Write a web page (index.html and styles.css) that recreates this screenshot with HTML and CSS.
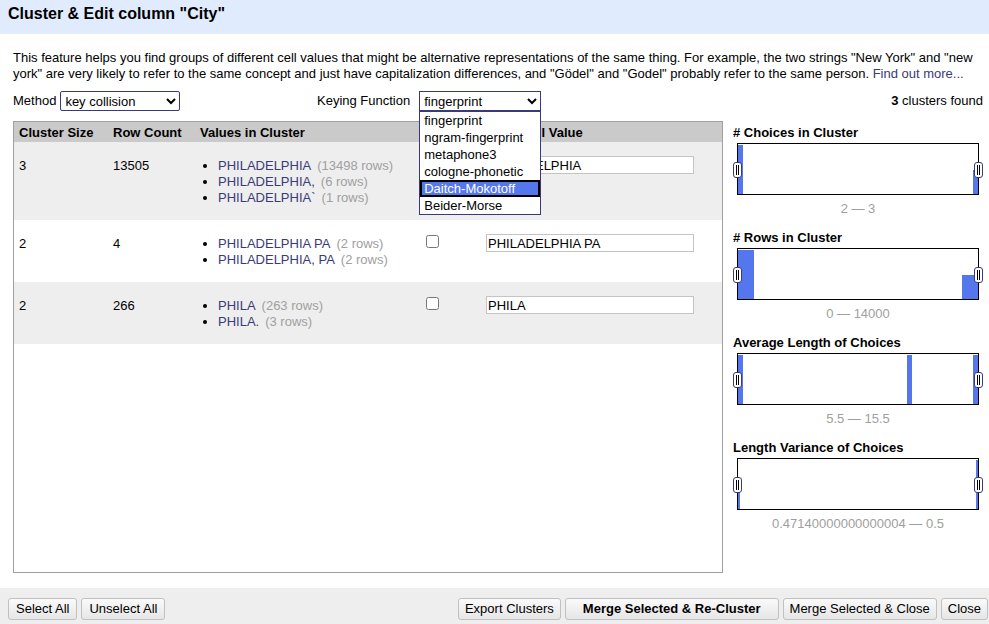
FILE: index.html
```html
<!DOCTYPE html>
<html lang="en">
<head>
<meta charset="utf-8">
<title>Cluster &amp; Edit column "City"</title>
<link rel="stylesheet" href="styles.css">
</head>
<body>
<header class="dialog-header"><h1>Cluster &amp; Edit column "City"</h1></header>
<main class="dialog-body">
  <p class="intro">This feature helps you find groups of different cell values that might be alternative representations of the same thing. For example, the two strings "New York" and "new<br>york" are very likely to refer to the same concept and just have capitalization differences, and "Gödel" and "Godel" probably refer to the same person. <a href="#">Find out more...</a></p>
  <div class="controls">
    <div class="control">
      <label for="method">Method</label>
      <select id="method"><option>key collision</option><option>nearest neighbor</option></select>
    </div>
    <div class="control keying">
      <label for="keying">Keying Function</label>
      <div class="dropdown">
        <select id="keying"><option>fingerprint</option><option>ngram-fingerprint</option><option>metaphone3</option><option>cologne-phonetic</option><option>Daitch-Mokotoff</option><option>Beider-Morse</option></select>
        <ul class="menu" role="listbox" aria-label="Keying Function">
          <li role="option">fingerprint</li>
          <li role="option">ngram-fingerprint</li>
          <li role="option">metaphone3</li>
          <li role="option">cologne-phonetic</li>
          <li role="option" class="active" aria-selected="true">Daitch-Mokotoff</li>
          <li role="option">Beider-Morse</li>
        </ul>
      </div>
    </div>
    <div class="summary"><b>3</b> clusters found</div>
  </div>
  <div class="panes">
    <div class="clusters">
      <table>
        <colgroup><col class="col-size"><col class="col-count"><col class="col-values"><col class="col-merge"><col></colgroup>
        <thead>
          <tr><th>Cluster Size</th><th>Row Count</th><th>Values in Cluster</th><th aria-label="Merge"></th><th class="new-value">New Cell Value</th></tr>
        </thead>
        <tbody>
          <tr>
            <td>3</td><td>13505</td>
            <td><ul class="values">
              <li><a href="#">PHILADELPHIA</a><span>(13498 rows)</span></li>
              <li><a href="#">PHILADELPHIA,</a><span>(6 rows)</span></li>
              <li><a href="#">PHILADELPHIA`</a><span>(1 rows)</span></li>
            </ul></td>
            <td class="field"><input type="checkbox" aria-label="Merge cluster 1"></td>
            <td class="field"><input type="text" aria-label="New value for cluster 1" value="PHILADELPHIA"></td>
          </tr>
          <tr>
            <td>2</td><td>4</td>
            <td><ul class="values">
              <li><a href="#">PHILADELPHIA PA</a><span>(2 rows)</span></li>
              <li><a href="#">PHILADELPHIA, PA</a><span>(2 rows)</span></li>
            </ul></td>
            <td class="field"><input type="checkbox" aria-label="Merge cluster 2"></td>
            <td class="field"><input type="text" aria-label="New value for cluster 2" value="PHILADELPHIA PA"></td>
          </tr>
          <tr>
            <td>2</td><td>266</td>
            <td><ul class="values">
              <li><a href="#">PHILA</a><span>(263 rows)</span></li>
              <li><a href="#">PHILA.</a><span>(3 rows)</span></li>
            </ul></td>
            <td class="field"><input type="checkbox" aria-label="Merge cluster 3"></td>
            <td class="field"><input type="text" aria-label="New value for cluster 3" value="PHILA"></td>
          </tr>
        </tbody>
      </table>
    </div>
    <aside class="facets">
      <section class="facet">
        <h2># Choices in Cluster</h2>
        <div class="histogram">
          <svg viewBox="0 0 240 50" preserveAspectRatio="none"><rect x="0" y="1" width="5" height="49"/><rect x="235" y="26" width="5" height="24"/></svg>
          <input type="range" aria-label="Minimum choices" value="0"><input type="range" aria-label="Maximum choices" value="100">
        </div>
        <p>2 — 3</p>
      </section>
      <section class="facet">
        <h2># Rows in Cluster</h2>
        <div class="histogram">
          <svg viewBox="0 0 240 50" preserveAspectRatio="none"><rect x="0" y="1" width="16" height="49"/><rect x="224" y="26" width="16" height="24"/></svg>
          <input type="range" aria-label="Minimum rows" value="0"><input type="range" aria-label="Maximum rows" value="100">
        </div>
        <p>0 — 14000</p>
      </section>
      <section class="facet">
        <h2>Average Length of Choices</h2>
        <div class="histogram">
          <svg viewBox="0 0 240 50" preserveAspectRatio="none"><rect x="0" y="1" width="5" height="49"/><rect x="169" y="1" width="5" height="49"/><rect x="235" y="1" width="5" height="49"/></svg>
          <input type="range" aria-label="Minimum average length" value="0"><input type="range" aria-label="Maximum average length" value="100">
        </div>
        <p>5.5 — 15.5</p>
      </section>
      <section class="facet">
        <h2>Length Variance of Choices</h2>
        <div class="histogram">
          <svg viewBox="0 0 240 50" preserveAspectRatio="none"><rect x="0" y="26" width="2" height="24"/><rect x="238" y="1" width="2" height="49"/></svg>
          <input type="range" aria-label="Minimum length variance" value="0"><input type="range" aria-label="Maximum length variance" value="100">
        </div>
        <p>0.47140000000000004 — 0.5</p>
      </section>
    </aside>
  </div>
</main>
<footer class="dialog-footer">
  <div class="buttons selection"><button>Select All</button><button>Unselect All</button></div>
  <div class="buttons"><button>Export Clusters</button><button class="primary">Merge Selected &amp; Re-Cluster</button><button>Merge Selected &amp; Close</button><button>Close</button></div>
</footer>
</body>
</html>
```
FILE: styles.css
```css
* { box-sizing: border-box; }
body {
  margin: 0;
  min-height: 100vh;
  display: flex;
  flex-direction: column;
  background: #fff;
  color: #000;
  font: 13px/16px "Liberation Sans", Arial, sans-serif;
}
h1, h2, p, ul { margin: 0; padding: 0; }
a { color: #3a3a78; text-decoration: none; }
select, input, button { margin: 0; font: inherit; color: inherit; }

.dialog-header { padding: 4px 8px 10px; background: #e0ebfd; }
.dialog-header h1 { font-size: 16px; line-height: 20px; }

.dialog-body {
  flex: 1;
  display: flex;
  flex-direction: column;
  padding: 16px 6px 15px 13px;
}
.intro { white-space: nowrap; }

.controls {
  display: grid;
  grid-template-columns: 304px 1fr auto;
  align-items: center;
  margin: 9px 0 10px;
  line-height: 18px;
}
.control { display: flex; align-items: center; gap: 4px; }
.keying { gap: 9px; }
.control select {
  width: 120px;
  height: 20px;
  padding: 0;
  border: 1px solid #3a3a78;
  border-radius: 2px;
  background-color: #fff;
}
.dropdown { position: relative; }
.keying select { display: block; width: 122px; border-radius: 0; }
.menu {
  position: absolute;
  top: 100%;
  left: 0;
  right: 0;
  z-index: 2;
  list-style: none;
  border: 1px solid #3a3a78;
  background: #fff;
}
.menu li { height: 17px; padding: 0 4px; line-height: 17px; }
.menu .active {
  padding: 0 2px;
  border: 2px solid #000;
  background: #5577ee;
  color: #fff;
  line-height: 13px;
}

.panes { flex: 1; display: flex; gap: 10px; }
.clusters { flex: 1; border: 1px solid #a0a0a0; }
table { width: 100%; border-collapse: collapse; table-layout: fixed; }
.col-size { width: 94px; }
.col-count { width: 87px; }
.col-values { width: 226px; }
.col-merge { width: 60px; }
th { padding: 3px 5px 1px; background: #cacaca; text-align: left; white-space: nowrap; }
th.new-value { padding-left: 10px; }
td { padding: 16px 5px 14px; vertical-align: top; }
td.field { padding-top: 14px; }
tbody tr:nth-child(odd) { background: #eee; }
.values { padding-left: 18px; }
.values span { margin-left: 6px; color: #a0a0a0; }
td input { display: block; }
td input[type="checkbox"] { width: 13px; height: 13px; margin-top: 1px; }
td input[type="text"] {
  width: 208px;
  height: 18px;
  padding: 0 1px;
  border: 1px solid #c4c4c4;
  background: #fff;
}

.facets { width: 250px; padding-top: 4px; }
.facet { margin-bottom: 13px; }
.facet h2 { font-size: 13px; line-height: 16px; }
.histogram {
  position: relative;
  height: 52px;
  margin: 2px 4px 6px;
  border: 1px solid #000;
}
.histogram svg { display: block; width: 100%; height: 100%; fill: #5577ee; }
.histogram input {
  position: absolute;
  top: 18px;
  left: -5px;
  width: calc(100% + 10px);
  height: 16px;
  appearance: none;
  background: none;
  pointer-events: none;
}
.histogram input::-webkit-slider-thumb {
  appearance: none;
  width: 9px;
  height: 16px;
  border: 1px solid #3a3a78;
  border-radius: 3px;
  background:
    linear-gradient(#000, #000) 2px 2px / 1px 10px no-repeat,
    linear-gradient(#000, #000) 4px 2px / 1px 10px no-repeat,
    #fff;
  pointer-events: auto;
}
.facet p { text-align: center; line-height: 16px; color: #a0a0a0; }

.dialog-footer {
  display: flex;
  justify-content: space-between;
  padding: 10px 1px 4px 8px;
  background: #eee;
}
.buttons { display: flex; gap: 4px; }
.buttons button {
  height: 22px;
  padding: 0 6px;
  border: 1px solid #c0c0c0;
  border-radius: 3px;
  background: linear-gradient(#fafafa, #e6e6e6);
  white-space: nowrap;
}
.selection button { padding: 0 7px; }
.buttons .primary { padding: 0 17px; font-weight: bold; }
```
